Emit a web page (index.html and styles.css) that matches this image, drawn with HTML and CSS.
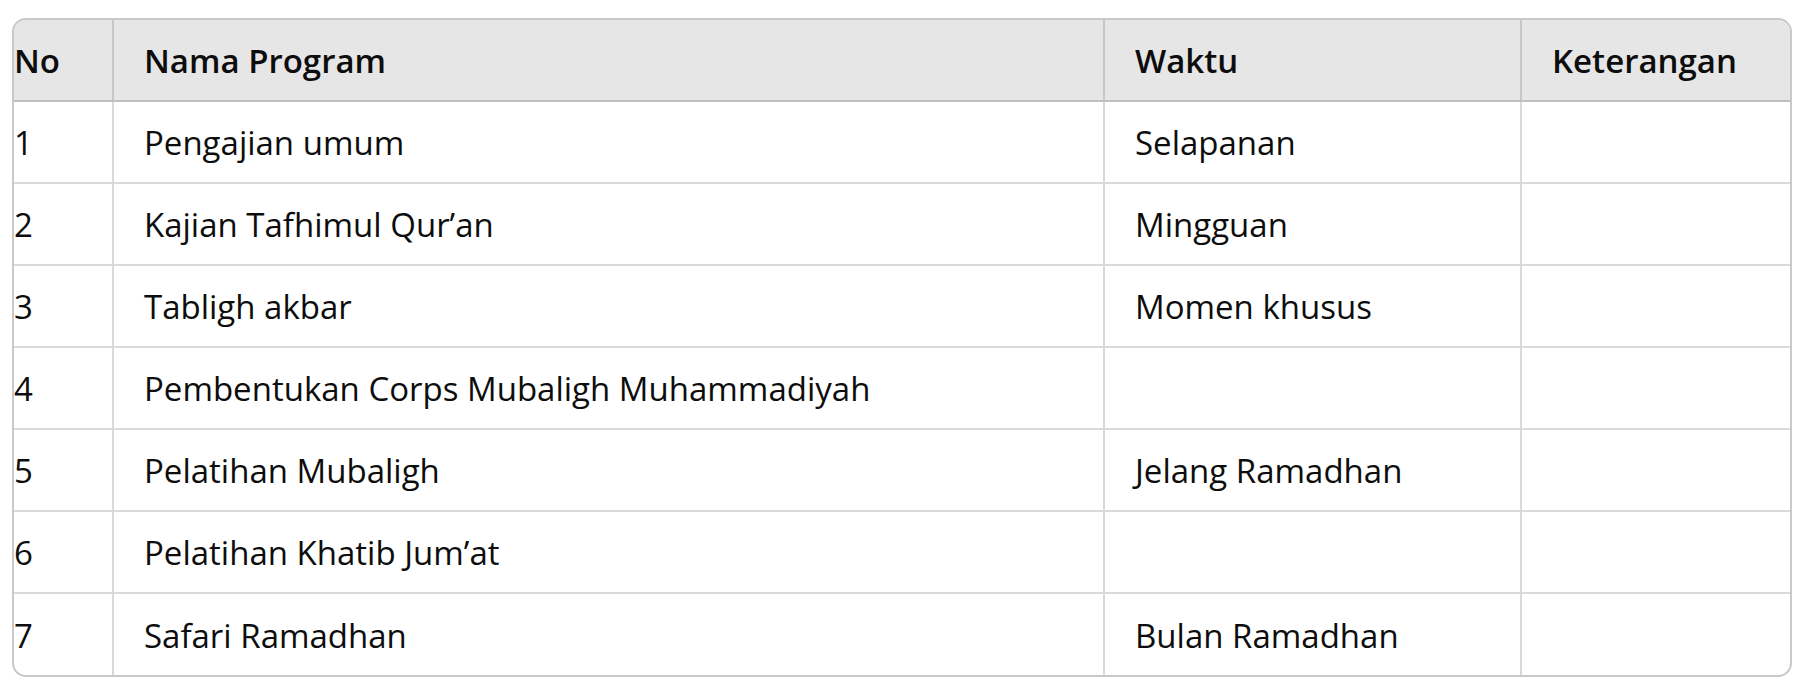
FILE: index.html
```html
<!DOCTYPE html>
<html lang="id">
<head>
<meta charset="utf-8">
<title>Program</title>
<link rel="stylesheet" href="styles.css">
</head>
<body>
<div class="table-wrap">
  <table class="prog-table">
    <colgroup>
      <col class="c-no">
      <col class="c-name">
      <col class="c-time">
      <col class="c-note">
    </colgroup>
    <thead>
      <tr><th>No</th><th>Nama Program</th><th>Waktu</th><th>Keterangan</th></tr>
    </thead>
    <tbody>
      <tr><td>1</td><td>Pengajian umum</td><td>Selapanan</td><td></td></tr>
      <tr><td>2</td><td>Kajian Tafhimul Qur’an</td><td>Mingguan</td><td></td></tr>
      <tr><td>3</td><td>Tabligh akbar</td><td>Momen khusus</td><td></td></tr>
      <tr><td>4</td><td>Pembentukan Corps Mubaligh Muhammadiyah</td><td></td><td></td></tr>
      <tr><td>5</td><td>Pelatihan Mubaligh</td><td>Jelang Ramadhan</td><td></td></tr>
      <tr><td>6</td><td>Pelatihan Khatib Jum’at</td><td></td><td></td></tr>
      <tr><td>7</td><td>Safari Ramadhan</td><td>Bulan Ramadhan</td><td></td></tr>
    </tbody>
  </table>
</div>
</body>
</html>
```
FILE: styles.css
```css
html, body {
  margin: 0;
  padding: 0;
  background: #ffffff;
}
body {
  padding: 18px 16px 0 12px;
  font-family: "Open Sans", "Noto Sans", sans-serif;
  color: #0d0d0d;
}
.table-wrap {
  border: 2px solid #c9c9c9;
  border-radius: 14px;
  overflow: hidden;
}
.prog-table {
  width: 100%;
  table-layout: fixed;
  border-collapse: separate;
  border-spacing: 0;
  font-size: 33px;
  line-height: 48px;
}
.c-no { width: 100px; }
.c-name { width: 991px; }
.c-time { width: 417px; }
.c-note { width: 268px; }
.prog-table th,
.prog-table td {
  box-sizing: border-box;
  height: 82px;
  padding: 17px 29px 15px 30px;
  text-align: left;
  vertical-align: middle;
  white-space: nowrap;
  border-right: 2px solid #d9d9d9;
  border-bottom: 2px solid #d9d9d9;
}
.prog-table th {
  background: #e6e6e6;
  font-weight: 600;
  border-right-color: #c6c6c6;
  border-bottom-color: #bfbfbf;
}
.prog-table td {
  font-weight: 400;
}
.prog-table th:first-child,
.prog-table td:first-child {
  padding-left: 0;
}
.prog-table th:last-child,
.prog-table td:last-child {
  border-right: none;
}
.prog-table tbody tr:last-child td {
  height: 81px;
  border-bottom: none;
}
```
